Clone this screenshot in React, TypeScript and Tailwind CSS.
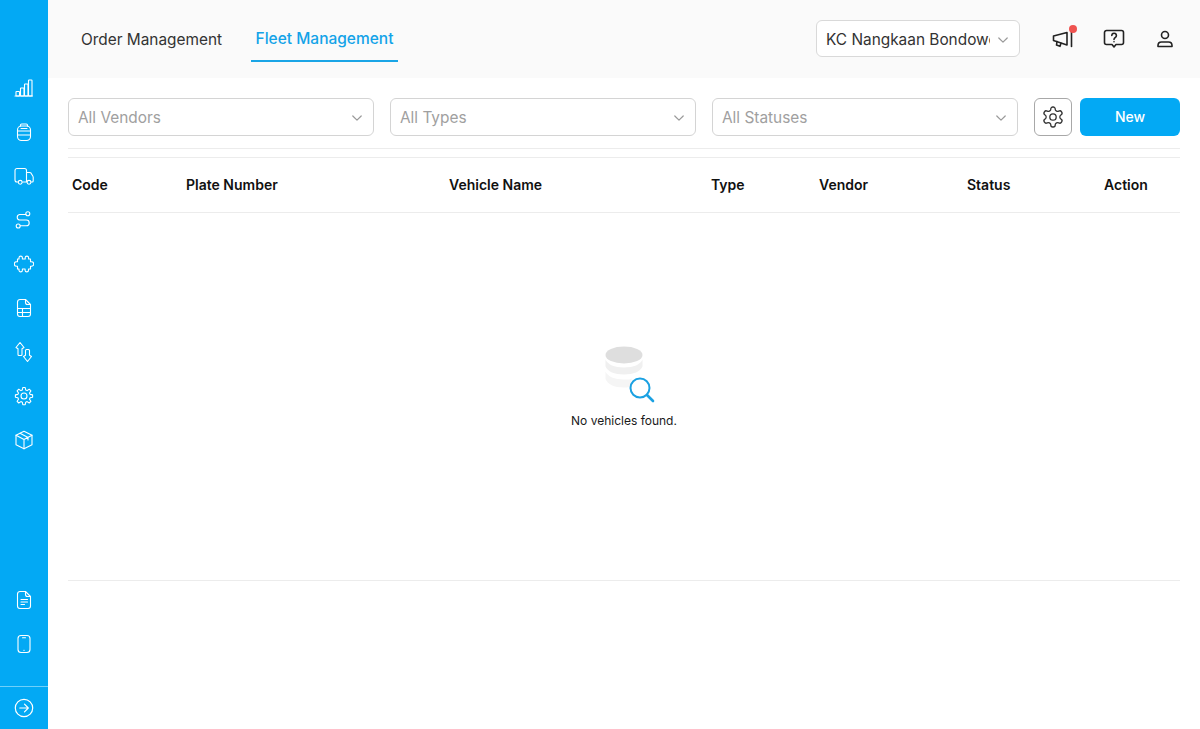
import React from "react";

const Side = ({ children }: { children: React.ReactNode }) => (
  <div className="h-[44px] w-full flex items-center justify-center shrink-0">
    <svg width="20" height="20" viewBox="0 0 20 20" fill="none" stroke="white" strokeWidth="1.1" strokeLinecap="round" strokeLinejoin="round">
      {children}
    </svg>
  </div>
);

const Chevron = () => (
  <svg width="10" height="10" viewBox="0 0 10 10" fill="none" stroke="#9a9a9a" strokeWidth="1.2" strokeLinecap="round" strokeLinejoin="round" className="shrink-0 mt-[2px]">
    <path d="M.8 3 L5 7.200 L9.200 3" />
  </svg>
);

const FilterSelect = ({ label }: { label: string }) => (
  <div className="w-[306px] h-[38px] border border-[#d4d4d4] rounded-[6px] bg-white flex items-center justify-between pl-[9px] pr-[11px] shrink-0">
    <span className="text-[15.4px] text-[#a0a0a0] pt-[2px]">{label}</span>
    <Chevron />
  </div>
);

export default function App() {
  return (
    <div className="w-[1200px] h-[729px] flex bg-white overflow-hidden" style={{ fontFamily: "Inter, 'Liberation Sans', sans-serif" }}>
      <aside className="w-[48px] h-full bg-[#03a9f4] flex flex-col pt-[66px] shrink-0">
        <Side>
          <path d="M1 18h17.500" />
          <rect x="2" y="13.500" width="3.500" height="4.500" rx=".6" />
          <rect x="6.500" y="10" width="3.500" height="8" rx=".6" />
          <rect x="10.500" y="6" width="3.500" height="12" rx=".6" />
          <rect x="14.500" y="2" width="3.500" height="16" rx=".6" />
        </Side>
        <Side>
          <rect x="3.500" y="4" width="13" height="14.500" rx="4" />
          <path d="M6.500 4V3.200C6.500 2.500 7 2 7.700 2h4.600c.7 0 1.200.5 1.200 1.200V4" />
          <path d="M3.500 9h13M3.500 13h13M7 6.500h6" />
        </Side>
        <Side>
          <path d="M12.500 16H8.500M4 16H3A2 2 0 0 1 1 14V4.500A2 2 0 0 1 3 2.500h7.500a2 2 0 0 1 2 2V16" />
          <path d="M12.500 6.500h3.200c.6 0 1.100.3 1.400.7l1.800 3c.2.300.3.600.3 1V15a1 1 0 0 1-1 1h-1" />
          <circle cx="6.200" cy="16.300" r="1.900" />
          <circle cx="15" cy="16.300" r="1.900" />
        </Side>
        <Side>
          <circle cx="13.800" cy="3.800" r="2" />
          <circle cx="4.200" cy="16" r="2" />
          <path d="M11.800 4.500H5.500a2.800 2.800 0 0 0 0 5.500h6.800a2.800 2.800 0 0 1 0 5.800H6.200" />
        </Side>
        <Side>
          <path d="M5 5V3.800a1.700 1.700 0 0 1 3.400 0V5h2.800V3.800a1.700 1.700 0 0 1 3.400 0V5H16.500v2.800h1a2 2 0 0 1 0 4.400h-1V15h-2v1.200a1.700 1.700 0 0 1-3.400 0V15H8.400v1.200a1.700 1.700 0 0 1-3.400 0V15H3.500v-2.800h-1a2 2 0 0 1 0-4.400h1V5z" />
        </Side>
        <Side>
          <path d="M11.500 1.500H6A2.500 2.500 0 0 0 3.500 4v12A2.500 2.500 0 0 0 6 18.500h8a2.500 2.500 0 0 0 2.500-2.500V6.500z" />
          <path d="M11.500 1.500V4.500a2 2 0 0 0 2 2h3" />
          <path d="M3.500 10.500h13M3.500 14.500h13M8.500 10.500v8" />
        </Side>
        <div className="h-[44px] w-full flex items-center justify-center shrink-0">
          <svg width="20" height="22" viewBox="0 0 20 22" fill="none" stroke="white" strokeWidth="1.1" strokeLinecap="round" strokeLinejoin="round">
            <path d="M6 1.500 10 6.500 8 7.800V13.500a1 1 0 0 1-1 1H5a1 1 0 0 1-1-1V7.800L2 6.500z" />
            <path d="M13.500 20.500 9.500 15.500l2-1.300V9.500a1 1 0 0 1 1-1h2a1 1 0 0 1 1 1v4.700l2 1.300z" />
          </svg>
        </div>
        <Side>
          <path d="M8.800 1.500h2.400l.5 2.500 1.400.6 2.100-1.400 1.700 1.700-1.400 2.100.6 1.400 2.500.5v2.400l-2.500.5-.6 1.400 1.400 2.100-1.700 1.700-2.100-1.400-1.400.6-.5 2.500H8.800l-.5-2.500-1.400-.6-2.100 1.400-1.700-1.700 1.400-2.100-.6-1.400-2.500-.5V8.900l2.500-.5.6-1.400-1.400-2.100 1.700-1.700 2.100 1.400 1.400-.6z" />
          <circle cx="10" cy="10" r="3" />
        </Side>
        <Side>
          <path d="M10 1.200 18 5.200v9.600L10 18.800 2 14.800V5.200z" />
          <path d="M2 5.200 10 9.500l8-4.300M10 9.500v9.300M6 3.200l8 4.200v2.500" />
        </Side>
        <div className="mt-[116px] shrink-0">
          <Side>
            <path d="M11.500 1.500H6A2.500 2.500 0 0 0 3.500 4v12A2.500 2.500 0 0 0 6 18.500h8a2.500 2.500 0 0 0 2.500-2.500V6.500z" />
            <path d="M11.500 1.500V4.500a2 2 0 0 0 2 2h3" />
            <path d="M7 9.500h6.500M7 12h6.500M7 14.500h3.500" />
          </Side>
          <Side>
            <rect x="4" y="1.500" width="12" height="17" rx="3" />
            <path d="M8.500 3.800h3M9.800 16.300h.4" />
          </Side>
        </div>
        <div className="mt-[20px] border-t border-[#6fd0fa] flex-1 flex items-center justify-center">
          <svg width="20" height="20" viewBox="0 0 20 20" fill="none" stroke="white" strokeWidth="1.2" strokeLinecap="round" strokeLinejoin="round">
            <circle cx="10" cy="10" r="8.700" />
            <path d="M5.800 10h8.400M10.500 6.200 14.300 10l-3.800 3.800" />
          </svg>
        </div>
      </aside>

      <div className="flex-1 flex flex-col min-w-0">
        <header className="h-[78px] bg-[#fafafa] flex items-stretch shrink-0 pl-[33px] pr-[25px]">
          <div className="h-[62px] w-[141px] flex items-end pb-[10px] text-[15.4px] leading-[24px] text-[#333333] whitespace-nowrap">Order Management</div>
          <div className="ml-[29px] w-[147px] h-[62px] border-b-2 border-[#1aa5e6] text-center pt-[27px] text-[15.5px] leading-[24px] font-medium text-[#13a3e8] whitespace-nowrap">Fleet Management</div>
          <div className="ml-auto mt-[20px] w-[204px] h-[37px] border border-[#d9d9d9] rounded-[6px] bg-white flex items-center pl-[9px] pr-[11px] gap-[8px]">
            <span className="w-[164px] overflow-hidden whitespace-nowrap text-[15.4px] text-[#333333] pt-[2px]">KC Nangkaan Bondowoso</span>
            <Chevron />
          </div>
          <div className="ml-[32px] w-[22px] h-[22px] mt-[28px] relative shrink-0">
            <svg width="22" height="22" viewBox="0 0 22 22" fill="none" stroke="#222" strokeWidth="1.600" strokeLinecap="round" strokeLinejoin="round">
              <path d="M1.500 8 15 4.500v12.500L1.500 12.500z" />
              <path d="M5 13.500 4.500 17l3.500 1.300 1-3" />
              <path d="M19.500 3.500v15" />
            </svg>
            <span className="absolute right-[-3px] top-[-3px] w-[8px] h-[8px] rounded-full bg-[#ef5350]" />
          </div>
          <div className="ml-[29px] w-[22px] h-[22px] mt-[28px] shrink-0">
            <svg width="22" height="22" viewBox="0 0 22 22" fill="none" stroke="#222" strokeWidth="1.600" strokeLinecap="round" strokeLinejoin="round">
              <path d="M3.500 2.500h15a2 2 0 0 1 2 2v10a2 2 0 0 1-2 2h-5.500L11 19l-2-2.500H3.500a2 2 0 0 1-2-2v-10a2 2 0 0 1 2-2z" />
              <path d="M8.800 7.500a2.300 2.300 0 1 1 3.500 2c-.8.500-1.300 1-1.300 2" />
              <path d="M11 13.800h.01" />
            </svg>
          </div>
          <div className="ml-[30px] w-[20px] h-[20px] mt-[29px] shrink-0">
            <svg width="20" height="20" viewBox="0 0 20 20" fill="none" stroke="#222" strokeWidth="1.600" strokeLinecap="round" strokeLinejoin="round">
              <circle cx="10" cy="6" r="3.500" />
              <path d="M3 17.500v-1c0-2 1.500-3.500 3.500-3.500h7c2 0 3.500 1.500 3.500 3.500v1z" />
            </svg>
          </div>
        </header>

        <main className="flex-1 px-[20px] pt-[20px] flex flex-col min-h-0">
          <div className="flex items-center h-[38px] gap-[16px] shrink-0">
            <FilterSelect label="All Vendors" />
            <FilterSelect label="All Types" />
            <FilterSelect label="All Statuses" />
            <div className="w-[38px] h-[38px] border border-[#a8a8a8] rounded-[6px] flex items-center justify-center shrink-0">
              <svg width="24" height="24" viewBox="0 0 24 24" fill="none" stroke="#333" strokeWidth="1.300" strokeLinecap="round" strokeLinejoin="round">
                <path d="M12.220 2h-.44a2 2 0 0 0-2 2v.18a2 2 0 0 1-1 1.730l-.43.250a2 2 0 0 1-2 0l-.15-.08a2 2 0 0 0-2.730.730l-.22.380a2 2 0 0 0 .730 2.730l.15.100a2 2 0 0 1 1 1.720v.510a2 2 0 0 1-1 1.740l-.15.090a2 2 0 0 0-.730 2.730l.22.380a2 2 0 0 0 2.730.730l.15-.08a2 2 0 0 1 2 0l.43.250a2 2 0 0 1 1 1.730V20a2 2 0 0 0 2 2h.44a2 2 0 0 0 2-2v-.18a2 2 0 0 1 1-1.730l.43-.25a2 2 0 0 1 2 0l.15.080a2 2 0 0 0 2.730-.730l.22-.390a2 2 0 0 0-.730-2.730l-.15-.08a2 2 0 0 1-1-1.740v-.5a2 2 0 0 1 1-1.740l.15-.090a2 2 0 0 0 .730-2.730l-.22-.380a2 2 0 0 0-2.730-.730l-.15.080a2 2 0 0 1-2 0l-.43-.25a2 2 0 0 1-1-1.730V4a2 2 0 0 0-2-2z" />
                <circle cx="12" cy="12" r="3.200" />
              </svg>
            </div>
            <div className="w-[100px] h-[38px] -ml-[8px] pb-[2px] bg-[#03a9f4] rounded-[6px] flex items-center justify-center text-[14px] font-medium text-white shrink-0">New</div>
          </div>
          <div className="mt-[12px] h-[1px] bg-[#ececec] shrink-0" />
          <div className="mt-[8px] border-t border-[#ececec] border-b h-[56px] grid grid-cols-[114px_263px_262px_108px_148px_137px_1fr] items-center pl-[4px] pb-[2px] text-[14px] font-semibold text-[#111111] shrink-0">
            <div>Code</div>
            <div>Plate Number</div>
            <div>Vehicle Name</div>
            <div>Type</div>
            <div>Vendor</div>
            <div>Status</div>
            <div>Action</div>
          </div>
          <div className="h-[368px] border-b border-[#ececec] flex flex-col items-center pt-[132px] shrink-0">
            <svg width="52" height="60" viewBox="0 0 52 60" fill="none" className="ml-[11px]">
              <ellipse cx="20" cy="10" rx="18.500" ry="8.500" fill="#dedede" />
              <path d="M1.500 14.500c2 5 9 8 18.500 8s16.500-3 18.500-8v7c-2 5-9 8-18.500 8S3.500 26.500 1.500 21.500z" fill="#f0f0f0" />
              <path d="M1.500 26.500c2 5 9 8 18.500 8 5 0 6 0 8-1-1 2-1 5 0 8-2 .5-5 1-8 1-10 0-16.500-3.500-18.500-8.500z" fill="#f5f5f5" />
              <circle cx="36" cy="43" r="9.500" fill="white" stroke="#1ba1e2" strokeWidth="2" />
              <path d="M43 50 49 56" stroke="#1ba1e2" strokeWidth="2.600" strokeLinecap="round" />
            </svg>
            <div className="mt-[7px] text-[12px] leading-[18px] text-[#1a1a1a]">No vehicles found.</div>
          </div>
        </main>
      </div>
    </div>
  );
}
